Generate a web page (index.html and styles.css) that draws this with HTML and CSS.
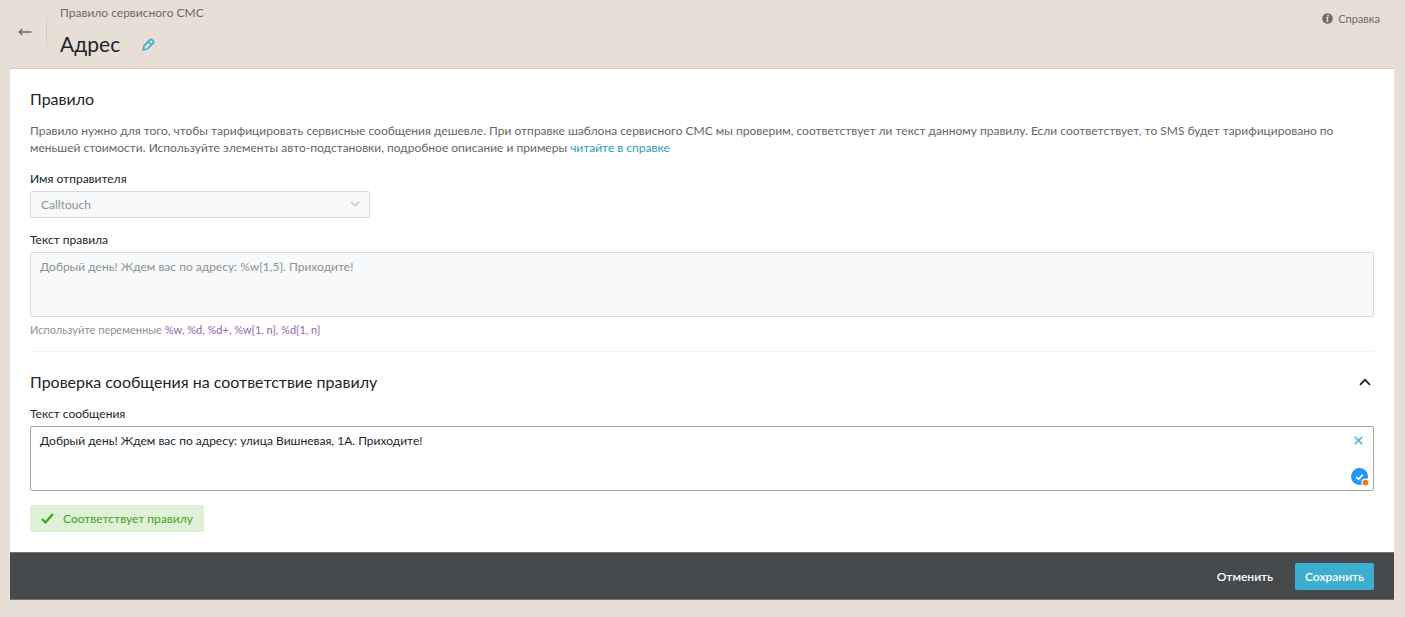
FILE: index.html
```html
<!DOCTYPE html>
<html lang="ru">
<head>
<meta charset="utf-8">
<meta name="viewport" content="width=device-width, initial-scale=1">
<title>Правило сервисного СМС</title>
<link rel="stylesheet" href="styles.css">
</head>
<body>
<header class="header">
  <button class="back" type="button" aria-label="Назад">
    <svg width="14" height="8" viewBox="0 0 14 8" fill="none" stroke="currentColor" stroke-width="1.5"><path d="M13.5 4H1.5M4.3 1L1.3 4l3 3"/></svg>
  </button>
  <div class="heading">
    <p class="crumb">Правило сервисного СМС</p>
    <div class="title-row">
      <h1 class="title">Адрес</h1>
      <button class="edit" type="button" aria-label="Изменить название">
        <svg width="13" height="13" viewBox="0 0 13 13" fill="none" stroke="currentColor" stroke-width="1.7" stroke-linejoin="round"><path d="M1.200 11.800l.8-4L7.900 1.900q1.100-1.100 2.200 0l1 1q1.100 1.100 0 2.200L5.200 11z"/><path d="M6.600 4l2.400 2.400" stroke-width="1.600"/></svg>
      </button>
    </div>
  </div>
  <a class="help" href="#help">
    <svg width="11" height="11" viewBox="0 0 11 11"><circle cx="5.500" cy="5.500" r="5.300" fill="currentColor"/><circle cx="6" cy="2.700" r=".9" fill="#e7ded5"/><path d="M4.200 4.700h1.600l-.7 3.700h1.300" fill="none" stroke="#e7ded5" stroke-width="1.200"/></svg>
    Справка
  </a>
</header>
<main class="panel">
  <section class="section">
    <h2 class="subtitle">Правило</h2>
    <p class="text">Правило нужно для того, чтобы тарифицировать сервисные сообщения дешевле. При отправке шаблона сервисного СМС мы проверим, соответствует ли текст данному правилу. Если соответствует, то SMS будет тарифицировано по<br> меньшей стоимости. Используйте элементы авто-подстановки, подробное описание и примеры <a class="link" href="#docs">читайте в справке</a></p>
    <div class="field">
      <label class="label" for="sender">Имя отправителя</label>
      <div class="select-wrap">
        <select class="select" id="sender" disabled><option>Calltouch</option></select>
        <svg class="select-arrow" width="10" height="6" viewBox="0 0 10 6" fill="none" stroke="currentColor" stroke-width="1.200"><path d="M1 .8l4 4 4-4"/></svg>
      </div>
    </div>
    <div class="field">
      <label class="label" for="rule">Текст правила</label>
      <textarea class="area area-disabled" id="rule" disabled>Добрый день! Ждем вас по адресу: %w{1,5}. Приходите!</textarea>
      <p class="hint">Используйте переменные <span class="vars">%w, %d, %d+, %w{1, n}, %d{1, n}</span></p>
    </div>
  </section>
  <section class="section section-check">
    <div class="check-head">
      <h2 class="subtitle">Проверка сообщения на соответствие правилу</h2>
      <button class="collapse" type="button" aria-label="Свернуть">
        <svg width="12" height="8" viewBox="0 0 12 8" fill="none" stroke="currentColor" stroke-width="1.800"><path d="M1 6.800l5-5 5 5"/></svg>
      </button>
    </div>
    <label class="label" for="message">Текст сообщения</label>
    <div class="area-wrap">
      <textarea class="area" id="message">Добрый день! Ждем вас по адресу: улица Вишневая, 1А. Приходите!</textarea>
      <button class="clear" type="button" aria-label="Очистить">
        <svg width="9" height="9" viewBox="0 0 9 9" fill="none" stroke="currentColor" stroke-width="1.400"><path d="M.7.7l7.600 7.600M8.300.7L.7 8.300"/></svg>
      </button>
      <svg class="checker" width="18" height="18" viewBox="0 0 18 18"><circle cx="8.500" cy="8.500" r="8.500" fill="#2196fb"/><path d="M5.300 9l2.400 2.300 4.100-4.700" fill="none" stroke="#fff" stroke-width="1.800"/><circle cx="14.400" cy="14.600" r="4" fill="#fff"/><circle cx="14.400" cy="14.600" r="2.900" fill="#f97316"/></svg>
    </div>
    <p class="status">
      <svg width="13" height="11" viewBox="0 0 13 11" fill="none" stroke="currentColor" stroke-width="2.200"><path d="M1 6l3.500 3.500L12 1"/></svg>
      Соответствует правилу
    </p>
  </section>
  <footer class="footer">
    <button class="btn" type="button">Отменить</button>
    <button class="btn btn-primary" type="button">Сохранить</button>
  </footer>
</main>
</body>
</html>
```
FILE: styles.css
```css
* { box-sizing: border-box; }

body {
  margin: 0;
  background: #e7ded5;
  color: #20262b;
  font: 12px/17px Lato, "Noto Sans", sans-serif;
}

h1, h2, p { margin: 0; font-weight: 400; }

button {
  padding: 0;
  border: 0;
  background: none;
  font: inherit;
  cursor: pointer;
}

svg { display: block; flex: none; }

.header {
  display: flex;
  align-items: flex-start;
  height: 68px;
  padding: 4px 25px 0 18px;
}

.back {
  display: flex;
  align-items: center;
  width: 29px;
  height: 28px;
  margin-top: 14px;
  border-right: 1px solid #d8ccbe;
  color: #756b60;
}

.heading { margin-left: 13px; }
.crumb { line-height: 18px; color: #756b60; }

.title-row {
  display: flex;
  align-items: center;
  gap: 22px;
  margin-top: 8px;
}

.title { font-size: 21px; line-height: 28px; }
.edit { color: #3eaecf; }

.help {
  display: flex;
  align-items: center;
  gap: 5px;
  margin: 6px 0 0 auto;
  color: #756b60;
  font-size: 11px;
  text-decoration: none;
}

.panel {
  margin: 0 11px 17px 10px;
  border-top: 1px solid #d5c6b6;
  background: #fff;
}

.section { padding: 20px 20px 0; }
.subtitle { font-size: 16px; line-height: 20px; }

.text {
  margin: 13px 0 14px;
  color: #696660;
}

.link { color: #2f9dbd; text-decoration: none; }
.field { margin-top: 13px; }

.label {
  display: block;
  margin-bottom: 4px;
}

.select-wrap {
  position: relative;
  max-width: 340px;
}

.select {
  display: block;
  width: 100%;
  height: 27px;
  padding: 0 10px;
  border: 1px solid #d6dadc;
  border-radius: 2px;
  background: #f8f9fb;
  color: #8b9293;
  font: inherit;
  opacity: 1;
  appearance: none;
}

.select-arrow {
  position: absolute;
  top: 10px;
  right: 10px;
  color: #b5babc;
}

.area {
  display: block;
  width: 100%;
  height: 65px;
  padding: 5px 9px;
  border: 1px solid #a3a8a8;
  border-radius: 2px;
  background: #fff;
  color: #20262b;
  font: inherit;
  resize: none;
}

.area-disabled {
  border-color: #d6dadc;
  background: #f8f9fb;
  color: #8b9293;
}

.hint {
  margin-top: 4px;
  color: #8b9293;
  font-size: 11px;
}

.vars { color: #9163b0; }

.section-check {
  margin: 13px 20px 0;
  padding: 20px 0;
  border-top: 1px solid #eef0f1;
}

.check-head {
  display: flex;
  align-items: center;
  justify-content: space-between;
  margin-bottom: 13px;
}

.collapse { margin-right: 3px; color: #20262b; }
.area-wrap { position: relative; }

.clear {
  position: absolute;
  top: 10px;
  right: 11px;
  color: #3eaecf;
}

.checker {
  position: absolute;
  right: 5px;
  bottom: 5px;
}

.status {
  display: inline-flex;
  align-items: center;
  gap: 9px;
  height: 27px;
  margin-top: 14px;
  padding: 0 11px;
  border-radius: 2px;
  background: #e0f1da;
  color: #3da414;
  vertical-align: top;
}

.footer {
  display: flex;
  align-items: center;
  justify-content: flex-end;
  gap: 12px;
  height: 48px;
  padding: 0 20px;
  border: solid #6d7173;
  border-width: 1px 0;
  background: #464a4d;
}

.btn {
  height: 27px;
  padding: 0 10px;
  border-radius: 2px;
  color: #fff;
  font-weight: 600;
}

.btn-primary { background: #3eaecf; }
```
